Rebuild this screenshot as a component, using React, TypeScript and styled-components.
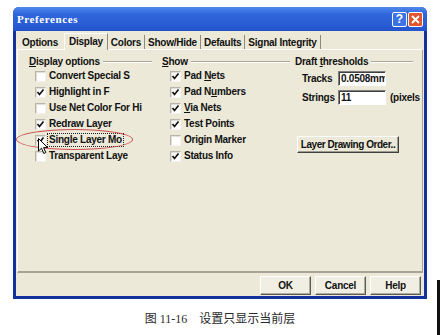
import React from "react";
import styled, { createGlobalStyle } from "styled-components";

const GlobalStyle = createGlobalStyle`
  html, body {
    margin: 0;
    padding: 0;
    background: #ffffff;
  }
  body {
    width: 440px;
    height: 335px;
    overflow: hidden;
    font-family: "Liberation Sans", Arial, sans-serif;
  }
`;

// 左の列
const displayOptions = [
  { label: "Convert Special S", checked: false },
  { label: "Highlight in F", checked: true },
  { label: "Use Net Color For Hi", checked: false },
  { label: "Redraw Layer", checked: true },
  { label: "Single Layer Mo", checked: true, focused: true },
  { label: "Transparent Laye", checked: false },
];

// 中の列 (key = 下線の文字)
const showOptions = [
  { pre: "Pad ", key: "N", post: "ets", checked: true },
  { pre: "Pad N", key: "u", post: "mbers", checked: true },
  { pre: "", key: "V", post: "ia Nets", checked: true },
  { pre: "Test Points", key: "", post: "", checked: true },
  { pre: "Origin Marker", key: "", post: "", checked: false },
  { pre: "Status Info", key: "", post: "", checked: true },
];

const tabs = ["Options", "Display", "Colors", "Show/Hide", "Defaults", "Signal Integrity"];

const Check = ({ on }: { on: boolean }) => (
  <CheckBox>
    {on && (
      <svg width="9" height="9" viewBox="0 0 9 9">
        <polyline points="1.5,4 3.5,6.5 7.5,1.5" fill="none" stroke="#111" strokeWidth="1.7" />
      </svg>
    )}
  </CheckBox>
);

export default function App() {
  return (
    <>
      <GlobalStyle />
      <Page>
        <Window>
          <TitleBar>
            <TitleText>Preferences</TitleText>
            <CapButton>?</CapButton>
            <CapButton $close>
              <svg width="9" height="9" viewBox="0 0 9 9">
                <path d="M1 1 L8 8 M8 1 L1 8" stroke="#fff" strokeWidth="1.8" />
              </svg>
            </CapButton>
          </TitleBar>

          <Body>
            <TabRow>
              {tabs.map((t) => (
                <Tab key={t} $active={t === "Display"}>
                  {t}
                </Tab>
              ))}
            </TabRow>

            <Panel>
              <Columns>
                <Group $width={123}>
                  <GroupHead>
                    <span>
                      <u>D</u>isplay options
                    </span>
                    <HeadLine />
                  </GroupHead>
                  <CheckList $indent={6}>
                    {displayOptions.map((o) => (
                      <CheckRow key={o.label}>
                        <Check on={o.checked} />
                        <CheckLabel $focused={!!o.focused}>{o.label}</CheckLabel>
                      </CheckRow>
                    ))}
                  </CheckList>
                </Group>

                <Group $width={128}>
                  <GroupHead>
                    <span>
                      <u>S</u>how
                    </span>
                    <HeadLine />
                  </GroupHead>
                  <CheckList $indent={8}>
                    {showOptions.map((o) => (
                      <CheckRow key={o.pre + o.post}>
                        <Check on={o.checked} />
                        <CheckLabel>
                          {o.pre}
                          {o.key && <u>{o.key}</u>}
                          {o.post}
                        </CheckLabel>
                      </CheckRow>
                    ))}
                  </CheckList>
                </Group>

                <Group $width={118}>
                  <GroupHead>
                    <span>
                      Draft <u>t</u>hresholds
                    </span>
                    <HeadLine />
                  </GroupHead>
                  <FieldRow>
                    <FieldLabel>Tracks</FieldLabel>
                    <TextBox>0.0508mm</TextBox>
                  </FieldRow>
                  <FieldRow>
                    <FieldLabel>Strings</FieldLabel>
                    <TextBox>11</TextBox>
                    <Unit>(pixels</Unit>
                  </FieldRow>
                  <OrderButton>
                    Layer D<u>r</u>awing Order..
                  </OrderButton>
                </Group>
              </Columns>
            </Panel>

            <ButtonRow>
              <DlgButton>OK</DlgButton>
              <DlgButton>Cancel</DlgButton>
              <DlgButton>Help</DlgButton>
            </ButtonRow>
          </Body>
        </Window>

        <Caption>图 11-16　设置只显示当前层</Caption>

        {/* 赤い丸の注釈とマウスカーソル */}
        <Ellipse />
        <Cursor width="11" height="17" viewBox="0 0 11 17">
          <path
            d="M0.5 0.5 L0.5 13 L3.5 10.2 L5.8 15.5 L7.8 14.6 L5.6 9.6 L9.6 9.6 Z"
            fill="#fff"
            stroke="#000"
            strokeWidth="1"
          />
        </Cursor>
        <EdgeLine />
      </Page>
    </>
  );
}

const Page = styled.div`
  position: relative;
  width: 440px;
  height: 335px;
  padding: 7px 0 0 13px;
  box-sizing: border-box;
`;

const Window = styled.div`
  width: 414px;
  height: 292px;
  display: flex;
  flex-direction: column;
  box-sizing: border-box;
  padding: 0 3px 3px 3px;
  background: #14309c;
  border-radius: 6px 6px 0 0;
`;

const TitleBar = styled.div`
  height: 24px;
  display: flex;
  align-items: center;
  gap: 1px;
  margin: 0 -3px;
  padding: 0 4px 0 4px;
  border-radius: 6px 6px 0 0;
  background: linear-gradient(#5288ee 0%, #3066dc 30%, #2b5dd6 70%, #2454cc 100%);
`;

const TitleText = styled.div`
  flex: 1;
  color: #ffffff;
  font-family: "Liberation Serif", "Times New Roman", serif;
  font-weight: bold;
  font-size: 11px;
  letter-spacing: 0.6px;
`;

const CapButton = styled.div<{ $close?: boolean }>`
  width: 15px;
  height: 15px;
  box-sizing: border-box;
  display: flex;
  align-items: center;
  justify-content: center;
  border: 1px solid #ffffff;
  border-radius: 2px;
  background: ${(p) => (p.$close ? "#e0562e" : "#3b72e6")};
  color: #ffffff;
  font-family: "Liberation Sans", Arial, sans-serif;
  font-weight: bold;
  font-size: 12px;
`;

const Body = styled.div`
  flex: 1;
  display: flex;
  flex-direction: column;
  background: #ece9d8;
  padding-top: 2px;
  font-size: 10px;
  font-weight: bold;
  letter-spacing: -0.25px;
  color: #111;
`;

const TabRow = styled.div`
  height: 16px;
  display: flex;
  align-items: flex-end;
  padding-left: 4px;
`;

const Tab = styled.div<{ $active?: boolean }>`
  position: relative;
  box-sizing: border-box;
  display: flex;
  align-items: center;
  white-space: nowrap;
  ${(p) =>
    p.$active
      ? `
    height: 17px;
    margin-bottom: -1px;
    padding: 0 4px 2px 4px;
    background: #ece9d8;
    border: 1px solid #ffffff;
    border-right-color: #8d8a7e;
    border-bottom: none;
    z-index: 1;
  `
      : `
    height: 14px;
    padding: 0 3px;
    border-right: 1px solid #8d8a7e;
    &:first-child { padding-left: 2px; border-right: none; margin-right: 3px; }
  `}
`;

const Panel = styled.div`
  height: 224px;
  margin: 0 1px;
  box-sizing: border-box;
  border: 1px solid #ffffff;
  border-right-color: #a7a497;
  border-bottom: 2px solid #a7a497;
  padding: 5px 0 0 11px;
`;

const Columns = styled.div`
  display: grid;
  grid-template-columns: 133px 133px 118px;
`;

const Group = styled.div<{ $width: number }>`
  width: ${(p) => p.$width}px;
  display: flex;
  flex-direction: column;
`;

const GroupHead = styled.div`
  height: 13px;
  display: flex;
  align-items: center;
  white-space: nowrap;
`;

const HeadLine = styled.div`
  flex: 1;
  margin-left: 3px;
  border-top: 1px solid #aca899;
  border-bottom: 1px solid #ffffff;
`;

const CheckList = styled.div<{ $indent: number }>`
  display: flex;
  flex-direction: column;
  padding-left: ${(p) => p.$indent}px;
`;

const CheckRow = styled.div`
  height: 16px;
  display: flex;
  align-items: center;
  white-space: nowrap;
`;

const CheckBox = styled.div`
  flex: none;
  width: 11px;
  height: 11px;
  box-sizing: border-box;
  display: flex;
  align-items: center;
  justify-content: center;
  background: #ffffff;
  border: 1px solid;
  border-color: #b8b5aa #f4f3ee #f4f3ee #b8b5aa;
  box-shadow: inset 1px 1px #e2e0d6;
`;

const CheckLabel = styled.span<{ $focused?: boolean }>`
  margin-left: 1px;
  padding: 0 1px;
  line-height: 12px;
  border: 1px dotted ${(p) => (p.$focused ? "#222" : "transparent")};
`;

const FieldRow = styled.div`
  display: flex;
  align-items: center;
  height: 15px;
  margin-top: 3px;
  padding-left: 7px;
  white-space: nowrap;
  & + & {
    margin-top: 4px;
  }
`;

const FieldLabel = styled.span`
  flex: none;
  width: 36px;
`;

const TextBox = styled.div`
  flex: none;
  width: 48px;
  height: 15px;
  box-sizing: border-box;
  overflow: hidden;
  white-space: nowrap;
  padding: 1px 0 0 2px;
  background: #ffffff;
  border: 1px solid;
  border-color: #7f7f7f #ffffff #ffffff #7f7f7f;
  box-shadow: inset 1px 1px #404040;
`;

const Unit = styled.span`
  flex: none;
  margin-left: 4px;
`;

const OrderButton = styled.div`
  width: 102px;
  height: 17px;
  margin: 31px 0 0 2px;
  box-sizing: border-box;
  display: flex;
  align-items: center;
  justify-content: center;
  white-space: nowrap;
  letter-spacing: -0.45px;
  background: #ece9d8;
  border: 1px solid;
  border-color: #ffffff #404040 #404040 #ffffff;
  box-shadow: inset -1px -1px #9d9a8e;
`;

const ButtonRow = styled.div`
  display: flex;
  justify-content: flex-end;
  gap: 4px;
  margin-top: 3px;
  padding-right: 3px;
`;

const DlgButton = styled.div`
  width: 51px;
  height: 19px;
  box-sizing: border-box;
  display: flex;
  align-items: center;
  justify-content: center;
  background: #f1efe4;
  border: 1px solid;
  border-color: #ffffff #5a5a5a #5a5a5a #ffffff;
  box-shadow: inset -1px -1px #aeab9f;
`;

const Caption = styled.div`
  margin: 12px 0 0 -13px;
  width: 440px;
  text-align: center;
  line-height: 16px;
  font-family: "Liberation Serif", "Noto Sans CJK SC", serif;
  font-size: 12px;
  color: #2a2a2a;
`;

const Ellipse = styled.div`
  position: absolute;
  left: 16px;
  top: 129px;
  width: 117px;
  height: 21px;
  box-sizing: border-box;
  border: 1px solid rgba(200, 50, 50, 0.85);
  border-radius: 50%;
`;

const Cursor = styled.svg`
  position: absolute;
  left: 38px;
  top: 138px;
`;

const EdgeLine = styled.div`
  position: absolute;
  left: 437px;
  top: 280px;
  width: 3px;
  height: 55px;
  background: #111;
`;
